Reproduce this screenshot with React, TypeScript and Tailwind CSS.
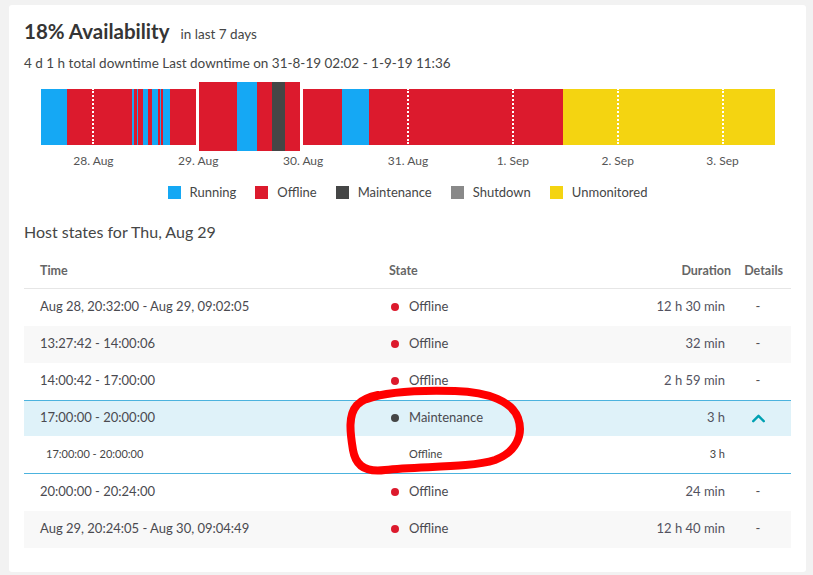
import React from "react";
import { ChevronUp } from "lucide-react";

type Seg = { w: number; c: string };

const RUN = "bg-[#15a8f4]";
const OFF = "bg-[#dc1a2d]";
const MAINT = "bg-[#454646]";

const before: Seg[] = [
  { w: 26, c: RUN },
  { w: 65, c: OFF },
  { w: 2, c: RUN },
  { w: 3, c: OFF },
  { w: 1, c: RUN },
  { w: 5, c: OFF },
  { w: 5, c: RUN },
  { w: 4, c: OFF },
  { w: 6, c: RUN },
  { w: 2, c: OFF },
  { w: 1, c: RUN },
  { w: 2, c: OFF },
  { w: 7, c: RUN },
  { w: 26, c: OFF },
];

const selected: Seg[] = [
  { w: 38, c: OFF },
  { w: 20, c: RUN },
  { w: 15, c: OFF },
  { w: 13, c: MAINT },
  { w: 15, c: OFF },
];

const after: Seg[] = [
  { w: 39, c: OFF },
  { w: 27, c: RUN },
  { w: 194, c: OFF },
  { w: 212, c: "bg-[#f4d411]" },
];

const days = ["28. Aug", "29. Aug", "30. Aug", "31. Aug", "1. Sep", "2. Sep", "3. Sep"];
const dotted = [true, false, false, true, true, true, true];

const legend = [
  { label: "Running", c: RUN },
  { label: "Offline", c: OFF },
  { label: "Maintenance", c: MAINT },
  { label: "Shutdown", c: "bg-[#898989]" },
  { label: "Unmonitored", c: "bg-[#f4d411]" },
];

const rows = [
  { time: "Aug 28, 20:32:00 - Aug 29, 09:02:05", dur: "12 h 30 min" },
  { time: "13:27:42 - 14:00:06", dur: "32 min" },
  { time: "14:00:42 - 17:00:00", dur: "2 h 59 min" },
];

const rowsAfter = [
  { time: "20:00:00 - 20:24:00", dur: "24 min" },
  { time: "Aug 29, 20:24:05 - Aug 30, 09:04:49", dur: "12 h 40 min" },
];

function Segments({ items, h }: { items: Seg[]; h: string }) {
  return (
    <div className={`flex ${h}`}>
      {items.map((s, i) => (
        <div key={i} className={s.c} style={{ width: s.w }} />
      ))}
    </div>
  );
}

function Row({
  time,
  dur,
  striped,
  dot = "bg-[#dc1a2d]",
  state = "Offline",
}: {
  time: string;
  dur: string;
  striped?: boolean;
  dot?: string;
  state?: string;
}) {
  return (
    <div className={`flex h-[37px] items-center text-[13px] ${striped ? "bg-[#f8f8f8]" : ""}`}>
      <div className="w-[365px] pl-4 text-[#4a4a50]">{time}</div>
      <div className="flex flex-1 items-center">
        <span className={`ml-[2px] mr-[10px] h-[8px] w-[8px] rounded-full ${dot}`} />
        <span className="text-[#4a4a50]">{state}</span>
      </div>
      <div className="text-right text-[#525260]">{dur}</div>
      <div className="w-[66px] text-center text-[#525252]">-</div>
    </div>
  );
}

export default function App() {
  return (
    <div className="relative h-[575px] w-[813px] bg-[#f2f2f2] px-[9px] pt-[5px] font-['Lato',sans-serif]">
      <div className="h-[567px] w-[797px] rounded-[3px] bg-white px-[15px] pt-[11px]">
        <div className="flex items-baseline gap-[11px]">
          <h1 className="text-[20.5px] font-bold text-[#353535]">18% Availability</h1>
          <span className="text-[13.5px] text-[#454646]">in last 7 days</span>
        </div>
        <p className="mt-[6px] text-[13.5px] text-[#454646]">
          4 d 1 h total downtime Last downtime on 31-8-19 02:02 - 1-9-19 11:36
        </p>

        <div className="relative ml-[17px] mt-[9px] w-[734px]">
          <div className="flex h-[69px] items-center">
            <Segments items={before} h="h-[56px]" />
            <div className="w-[3px]" />
            <Segments items={selected} h="h-[69px]" />
            <div className="w-[3px]" />
            <Segments items={after} h="h-[56px]" />
          </div>
          <div className="pointer-events-none absolute left-0 right-0 top-[6px] grid h-[56px] grid-cols-7">
            {dotted.map((d, i) => (
              <div key={i} className="flex justify-center">
                {d && <div className="h-full border-l-2 border-dotted border-white" />}
              </div>
            ))}
          </div>
          <div className="mt-[1px] grid grid-cols-7 text-[12px] text-[#555555]">
            {days.map((d) => (
              <div key={d} className="text-center">
                {d}
              </div>
            ))}
          </div>
        </div>

        <div className="mt-[13px] flex justify-center gap-[19px] text-[13px] text-[#454646]">
          {legend.map((l) => (
            <div key={l.label} className="flex items-center gap-[9px]">
              <span className={`h-[13px] w-[13px] ${l.c}`} />
              <span>{l.label}</span>
            </div>
          ))}
        </div>

        <h2 className="mt-[17px] text-[16px] text-[#454646]">Host states for Thu, Aug 29</h2>

        <div className="mt-[13px]">
          <div className="flex h-[32px] items-center border-b border-[#e6e6e6] pb-[1px] text-[12.5px] font-bold text-[#666666]">
            <div className="w-[365px] pl-4">Time</div>
            <div className="flex-1">State</div>
            <div className="text-right">Duration</div>
            <div className="w-[60px] pr-2 text-right">Details</div>
          </div>
          {rows.map((r, i) => (
            <Row key={r.time} time={r.time} dur={r.dur} striped={i % 2 === 1} />
          ))}
          <div className="border-y border-[#4cb3de]">
            <div className="flex h-[35px] items-center bg-[#dff2f9] text-[13px]">
              <div className="w-[365px] pl-4 text-[#4a4a50]">17:00:00 - 20:00:00</div>
              <div className="flex flex-1 items-center">
                <span className="ml-[2px] mr-[10px] h-[8px] w-[8px] rounded-full bg-[#454646]" />
                <span className="text-[#4a4a50]">Maintenance</span>
              </div>
              <div className="text-right text-[#525260]">3 h</div>
              <div className="flex w-[66px] justify-center text-[#00a1b2]">
                <ChevronUp size={21} strokeWidth={2.75} />
              </div>
            </div>
            <div className="flex h-[37px] items-center text-[11px] text-[#454646]">
              <div className="w-[365px] pl-[22px]">17:00:00 - 20:00:00</div>
              <div className="flex-1 pl-[20px]">Offline</div>
              <div className="text-right">3 h</div>
              <div className="w-[66px]" />
            </div>
          </div>
          {rowsAfter.map((r, i) => (
            <Row key={r.time} time={r.time} dur={r.dur} striped={i % 2 === 1} />
          ))}
        </div>
      </div>

      <svg
        className="pointer-events-none absolute inset-0"
        width="813"
        height="575"
        viewBox="0 0 813 575"
        fill="none"
      >
        <path
          d="M 367 399 C 385 392, 420 390, 455 391 C 490 392, 512 402, 518 418 C 524 435, 516 452, 495 460 C 470 468, 420 466, 385 470 C 362 473, 355 462, 353 450 C 350 432, 348 415, 357 405 C 362 400, 368 397, 378 395"
          stroke="#ff0000"
          strokeWidth={8}
          strokeLinecap="round"
          strokeLinejoin="round"
        />
      </svg>
    </div>
  );
}
